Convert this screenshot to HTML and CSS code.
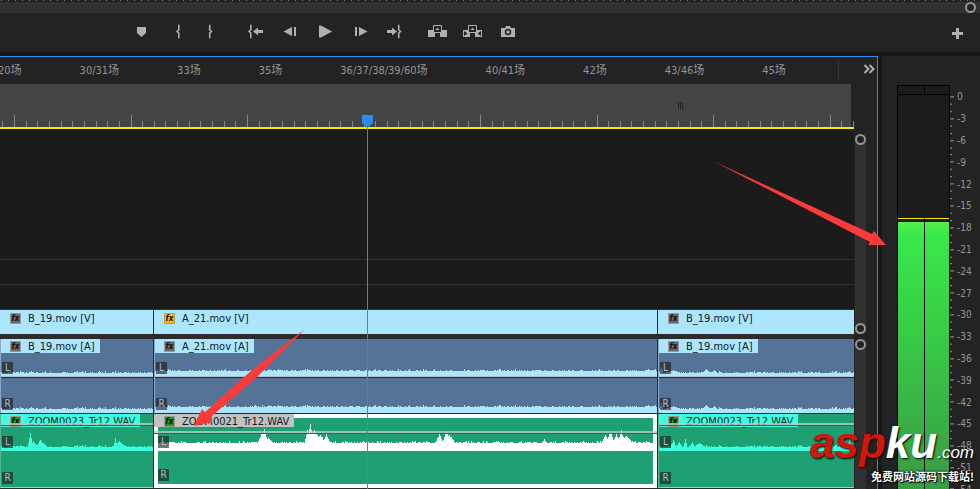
FILE: index.html
```html
<!DOCTYPE html>
<html lang="zh-CN">
<head>
    <meta charset="UTF-8">
    <meta name="viewport" content="width=device-width, initial-scale=1.0">
    <title>Timeline</title>
    <link rel="stylesheet" href="styles.css">
</head>
<body>
    <div class="monitor">
        <div class="mini-ruler"></div>
        <div class="zoom-bar"><span class="ring"></span></div>
        <div class="transport">
            <div class="group">
                <button aria-label="Add marker"><svg viewBox="0 0 21 19"><path d="M6 4h9v6l-4.500 4L6 10z"/></svg></button>
                <button aria-label="Mark in"><svg viewBox="0 0 21 19"><path class="line" d="M13.500 2.500h-.7V7L11 8.500l1.800 1.500v4.500h.7"/></svg></button>
                <button aria-label="Mark out"><svg viewBox="0 0 21 19"><path class="line" d="M8 2.500h.7V7l1.800 1.500L8.700 10v4.500H8"/></svg></button>
            </div>
            <div class="group">
                <button aria-label="Go to in"><svg viewBox="0 0 21 19"><path class="line" d="M7.500 2.500h-.7V7L5 8.500 6.800 10v4.500h.7"/><path d="M9 8.500l5-4V7h5v3h-5v2.500z"/></svg></button>
                <button aria-label="Step back"><svg viewBox="0 0 21 19"><path d="M4.500 8.500L13 4v9zM15 4h2v9h-2z"/></svg></button>
                <button aria-label="Play"><svg viewBox="0 0 21 19"><path d="M5 2.500h2l11 6-11 6H5z"/></svg></button>
                <button aria-label="Step forward"><svg viewBox="0 0 21 19"><path d="M6 4h2v9H6zM10 4l8.500 4.500L10 13z"/></svg></button>
                <button aria-label="Go to out"><svg viewBox="0 0 21 19"><path d="M3 7h5V4.500l5 4-5 4V10H3z"/><path class="line" d="M14 2.500h.7V7l1.800 1.500-1.800 1.500v4.500H14"/></svg></button>
            </div>
            <div class="group">
                <button aria-label="Lift"><svg viewBox="0 0 21 19"><path d="M1 7h7v7H1zM13 7h7v7h-7z"/><path class="box" d="M6.500 2.500h8v7h-8z"/><path d="M8.500 7h4l-2-2.500z"/></svg></button>
                <button aria-label="Extract"><svg viewBox="0 0 21 19"><path d="M1 7h7v7H1zM13 7h7v7h-7z"/><path class="box" d="M6.500 2.500h8v7h-8z"/><path d="M8.500 7h4l-2-2.500z"/><path class="hole" d="M2 8l3.500 2.500L2 13zM19 8l-3.500 2.500L19 13z"/></svg></button>
                <button aria-label="Export frame"><svg viewBox="0 0 21 19"><path d="M4 5h4l1-2h4l1 2h4v9H4z"/><circle class="lens" cx="11" cy="9" r="2.500"/></svg></button>
            </div>
            <button class="add" aria-label="Button editor"><svg viewBox="0 0 21 19"><path d="M9 5h3v4h4v3h-4v4H9v-4H5V9h4z"/></svg></button>
        </div>
    </div>

    <div class="workspace">
        <div class="timeline">
            <div class="tab-bar">
                <div class="tabs">
                    <button>20场</button>
                    <button>30/31场</button>
                    <button>33场</button>
                    <button>35场</button>
                    <button>36/37/38/39/60场</button>
                    <button>40/41场</button>
                    <button>42场</button>
                    <button>43/46场</button>
                    <button>45场</button>
                </div>
                <button class="more" aria-label="More sequences"><svg viewBox="0 0 12 10"><path d="M1.500 1l4 4-4 4M6.500 1l4 4-4 4"/></svg></button>
            </div>
            <div class="sequence">
                <div class="tracks">
                    <div class="ruler">
                        <span class="grip"></span>
                        <svg id="ticks" viewBox="0 0 854 12" preserveAspectRatio="none"></svg>
                    </div>
                    <div class="empty-area"></div>
                    <div class="empty-lane"></div>
                    <div class="empty-lane"></div>

                    <div class="track video">
                        <div class="clip"><div class="label"><i class="fx">fx</i>B_19.mov [V]</div></div>
                        <div class="clip"><div class="label"><i class="fx yellow">fx</i>A_21.mov [V]</div></div>
                        <div class="clip"><div class="label"><i class="fx">fx</i>B_19.mov [V]</div></div>
                    </div>

                    <div class="track audio">
                        <div class="clip">
                            <div class="label"><i class="fx">fx</i>B_19.mov [A]</div>
                            <div class="channel left"><b>L</b><svg class="wave" viewBox="0 0 153 37" data-base="3" data-peaks="30:2:2"></svg></div>
                            <div class="channel"><b>R</b><svg class="wave" viewBox="0 0 153 37" data-base="4" data-peaks="30:2:2"></svg></div>
                        </div>
                        <div class="clip">
                            <div class="label"><i class="fx">fx</i>A_21.mov [A]</div>
                            <div class="channel left"><b>L</b><svg class="wave" viewBox="0 0 503 37" data-base="5" data-peaks=""></svg></div>
                            <div class="channel"><b>R</b><svg class="wave" viewBox="0 0 503 37" data-base="6" data-peaks=""></svg></div>
                        </div>
                        <div class="clip">
                            <div class="label"><i class="fx">fx</i>B_19.mov [A]</div>
                            <div class="channel left"><b>L</b><svg class="wave" viewBox="0 0 196 37" data-base="3" data-peaks="2:7:2,14:3:8,47:4:5,55:3:3"></svg></div>
                            <div class="channel"><b>R</b><svg class="wave" viewBox="0 0 196 37" data-base="4" data-peaks="2:7:2,14:3:8,47:4:5,55:3:3"></svg></div>
                        </div>
                    </div>

                    <div class="track zoom">
                        <div class="clip">
                            <div class="label"><i class="fx green">fx</i>ZOOM0023_Tr12.WAV</div>
                            <div class="channel"><b>L</b><svg class="wave" viewBox="0 0 153 37" data-base="4" data-peaks="29:14:3,32:6:5,39:9:4,42:5:4,115:9:2,119:6:7"></svg></div>
                            <div class="channel"><b>R</b></div>
                            <span class="volume"></span>
                        </div>
                        <div class="clip selected">
                            <div class="label"><i class="fx green">fx</i>ZOOM0021_Tr12.WAV</div>
                            <div class="channel"><b>L</b><svg class="wave" viewBox="0 0 495 33" data-base="8" data-peaks="104:11:5,106:14:4,110:5:5,149:14:3,152:20:4,156:13:9,162:10:5,168:10:4,281:10:4,288:14:4,291:9:6,386:4:3,447:9:4,452:13:4,458:10:4,463:13:4,468:8:6"></svg></div>
                            <div class="channel"><b>R</b></div>
                            <span class="volume"></span>
                        </div>
                        <div class="clip">
                            <div class="label"><i class="fx green">fx</i>ZOOM0023_Tr12.WAV</div>
                            <div class="channel"><b>L</b><svg class="wave" viewBox="0 0 196 37" data-base="4" data-peaks="14:8:3,20:6:3,26:9:2,33:5:3,40:4:6,186:8:3,191:6:4"></svg></div>
                            <div class="channel"><b>R</b></div>
                            <span class="volume"></span>
                        </div>
                    </div>

                    <div class="playhead"><svg viewBox="0 0 11 14"><path d="M0 0h11v8l-5 4H5L0 8z"/></svg></div>
                </div>
                <div class="scrollbars">
                    <div class="scroll video-scroll"><span class="ring"></span><span class="ring"></span></div>
                    <div class="scroll audio-scroll"><span class="ring"></span></div>
                </div>
            </div>
        </div>

        <div class="meters">
            <div class="meter">
                <div class="clip-lights"><span></span><span></span></div>
                <div class="bars">
                    <span class="bar"></span>
                    <span class="bar"></span>
                </div>
            </div>
            <ol class="scale" id="scale"></ol>
        </div>
    </div>

    <svg class="arrows" viewBox="0 0 980 489">
        <path d="M713 161L872 234l2-3 12 14h-18l2-3z"/>
        <path d="M305 329L257 377 212 416v6l-18 4 8-17 3 3 47-42z"/>
    </svg>

    <div class="watermark">
        <div class="brand"><span class="red">asp</span><span>ku</span><span class="com">.com</span></div>
        <div class="slogan">免费网站源码下载站!</div>
    </div>

    <script src="script.js"></script>
</body>
</html>
```

FILE: styles.css
```css
* {
    box-sizing: border-box;
}
body {
    margin: 0;
    height: 100vh;
    display: flex;
    flex-direction: column;
    position: relative;
    overflow: hidden;
    background: #171717;
    color: #959595;
    font-family: 'DejaVu Sans Condensed', 'Noto Sans CJK SC', sans-serif;
    font-size: 11px;
}
button {
    background: none;
    border: 0;
    padding: 0;
    color: inherit;
    font: inherit;
}
svg {
    display: block;
}
.ring {
    display: block;
    width: 11px;
    height: 11px;
    border: 2px solid #959595;
    border-radius: 50%;
    background: #232323;
}

/* monitor strip */
.monitor {
    background: #232323;
}
.mini-ruler {
    height: 2px;
    background: repeating-linear-gradient(90deg, transparent 0 1px, #777 1px 2px, transparent 2px 7px) 0 0 / 100% 1px no-repeat;
}
.zoom-bar {
    height: 11px;
    background: #313131;
    display: flex;
    justify-content: flex-end;
    padding-right: 4px;
}
.transport {
    display: flex;
    align-items: center;
    gap: 8px;
    height: 39px;
    padding: 0 12px 0 124px;
}
.group {
    display: flex;
}
.transport button {
    width: 35px;
    display: flex;
    justify-content: center;
}
.transport svg {
    width: 21px;
    height: 19px;
    fill: #b0b0b0;
}
.transport .line {
    fill: none;
    stroke: #b0b0b0;
    stroke-width: 1.6;
}
.transport .box {
    fill: #232323;
    stroke: #b0b0b0;
}
.transport .hole {
    fill: #232323;
}
.transport .lens {
    fill: none;
    stroke: #232323;
    stroke-width: 1.5;
}
.transport .add {
    width: 21px;
    margin-left: auto;
}

.workspace {
    flex: 1;
    min-height: 0;
    display: flex;
    gap: 4px;
    margin-top: 4px;
}

/* timeline */
.timeline {
    flex: 1;
    min-width: 0;
    display: flex;
    flex-direction: column;
    background: #232323;
    border-top: 1px solid #2d8ceb;
    border-right: 1px solid #2d8ceb;
}
.tab-bar {
    display: flex;
    height: 27px;
    padding-bottom: 3px;
}
.tabs {
    flex: 1;
    min-width: 0;
    display: flex;
    align-items: center;
    gap: 58px;
    margin-left: -2px;
    white-space: nowrap;
}
.more {
    display: flex;
    align-items: center;
    margin: 3px 2px 0 0;
    padding: 0 0 3px 24px;
    border-left: 1px solid #333;
}
.more svg {
    width: 12px;
    height: 10px;
    fill: none;
    stroke: #b0b0b0;
    stroke-width: 2;
}
.sequence {
    flex: 1;
    min-height: 0;
    display: flex;
}
.tracks {
    flex: 1;
    position: relative;
    background: #2b2b2b;
}
.ruler {
    height: 45px;
    display: flex;
    flex-direction: column;
    justify-content: flex-end;
    position: relative;
    border-bottom: 2px solid #f4ee00;
    background: linear-gradient(90deg, #444 calc(100% - 3px), #232323 0);
}
.ruler svg {
    width: 100%;
    height: 12px;
    fill: #858585;
    shape-rendering: crispEdges;
}
.grip {
    position: absolute;
    left: 79.4%;
    top: 18px;
    width: 5px;
    height: 7px;
    background: repeating-linear-gradient(90deg, #222 0 1px, transparent 1px 2px);
}
.empty-area,
.empty-lane {
    background: #1b1b1b;
    border-bottom: 1px solid #333;
    height: 25px;
}
.empty-area {
    height: 131px;
}
.track {
    display: grid;
    grid-template-columns: 153fr 503fr 196fr;
    gap: 1px;
    background: #2b2b2b;
}
.clip {
    position: relative;
    min-width: 0;
}
.label {
    position: absolute;
    left: 0;
    top: 0;
    display: flex;
    align-items: center;
    height: 13px;
    padding: 1px 5px 0 10px;
    color: #101820;
    white-space: nowrap;
}
.fx {
    width: 11px;
    height: 11px;
    margin-right: 7px;
    border: 1px solid #999;
    background: #666;
    color: #111;
    font: italic bold 8px/9px 'DejaVu Sans Condensed', sans-serif;
    text-align: center;
}
.fx.yellow {
    background: #f5bd00;
    border-color: #c0a050;
}
.fx.green {
    background: #189a18;
}
.video {
    margin-bottom: 5px;
}
.video .clip {
    height: 24px;
    background: #ace5ff;
}
.video .label {
    height: 15px;
}
.audio {
    margin-bottom: 1px;
}
.audio .clip {
    background: #557297;
    border-left: 1px solid #8aa8c4;
}
.audio .label {
    height: 14px;
    background: #ace5ff;
    padding-left: 9px;
}
.channel {
    position: relative;
    display: flex;
    flex-direction: column;
    justify-content: flex-end;
    height: 35px;
}
.channel.left {
    height: 39px;
    border-bottom: 1px solid #2b2b2b;
    box-shadow: inset 0 -1px #b9c2c8;
    padding-bottom: 1px;
}
.channel b {
    position: absolute;
    left: 1px;
    bottom: 3px;
    width: 11px;
    height: 12px;
    background: rgba(20, 25, 30, 0.6);
    color: #b5bcc0;
    font-size: 10px;
    font-weight: normal;
    line-height: 12px;
    text-align: center;
}
.wave {
    width: 100%;
    height: 37px;
    flex-shrink: 0;
    fill: #ace5ff;
    shape-rendering: crispEdges;
}
.zoom .clip {
    height: 74px;
    background: #1ea073;
    border-left: 1px solid #55b891;
    border-bottom: 1px solid #3dffe0;
}
.zoom .channel {
    height: 37px;
}
.zoom .channel + .channel {
    height: 36px;
}
.zoom .label {
    background: #3dffe0;
    padding-left: 9px;
}
.zoom .wave {
    fill: #3dffe0;
}
.zoom .selected {
    border: 4px solid #fff;
}
.zoom .selected .label {
    left: -4px;
    top: -4px;
    padding-left: 10px;
    background: #c2c2c2;
    z-index: 1;
}
.zoom .selected .channel {
    height: 33px;
}
.zoom .selected .channel b {
    left: 0;
}
.zoom .selected .wave {
    height: 33px;
    fill: #fff;
}
.volume {
    position: absolute;
    left: 0;
    right: 0;
    top: 9px;
    height: 3px;
    background: rgba(190, 200, 195, 0.8);
    border-bottom: 1px solid #3f5f53;
}
.selected .volume {
    left: -4px;
    right: -4px;
    top: 13px;
}
.playhead {
    position: absolute;
    left: 43%;
    top: 31px;
    bottom: 0;
    width: 1px;
    background: #2d8ceb;
}
.playhead svg {
    width: 11px;
    height: 14px;
    margin-left: -5px;
    fill: #2d8ceb;
}
.scrollbars {
    width: 23px;
    padding: 50px 11px 0 1px;
    display: flex;
    flex-direction: column;
    gap: 5px;
}
.scroll {
    display: flex;
    flex-direction: column;
    justify-content: space-between;
    background: #313131;
    border-radius: 5px 5px 0 0;
}
.video-scroll {
    height: 200px;
}
.audio-scroll {
    flex: 1;
}

/* audio meters */
.meters {
    width: 98px;
    display: flex;
    padding: 29px 0 0 15px;
    overflow: hidden;
    background: #232323;
}
.meter {
    width: 53px;
    display: flex;
    flex-direction: column;
    border: 1px solid #000;
    border-bottom: 0;
    background: #1c1c1c;
}
.clip-lights,
.bars {
    display: grid;
    grid-template-columns: 1fr 1fr;
}
.clip-lights {
    height: 9px;
    border-bottom: 1px solid #000;
}
.clip-lights span + span,
.bar + .bar {
    border-left: 1px solid #000;
}
.bars {
    flex: 1;
    padding-top: 123px;
}
.bar {
    border-top: 1px solid #f5e800;
    background: linear-gradient(#55ef4b, #37e94a 14px, #37cf45 100px, #3a9a45 270px) 0 3px no-repeat;
}
.scale {
    flex: 1;
    display: flex;
    flex-direction: column;
    margin: 1px 0 -11px;
    padding: 0;
    list-style: none;
    font-size: 10px;
}
.scale li {
    flex: 1;
    display: flex;
    align-items: center;
    gap: 3px;
    min-height: 0;
}
.scale svg {
    width: 4px;
    height: 100%;
    fill: #959595;
}

/* overlays */
.arrows {
    position: absolute;
    inset: 0;
    z-index: 2;
    width: 100%;
    height: 100%;
    fill: #fb3b3a;
    pointer-events: none;
}
.watermark {
    position: absolute;
    right: 6px;
    bottom: 6px;
    z-index: 2;
    text-align: right;
    color: #fff;
    white-space: nowrap;
    text-shadow: 1px 1px 2px #000;
}
.brand {
    font: italic bold 44px/32px 'Liberation Sans', sans-serif;
}
.brand .red {
    color: #d3160c;
}
.brand .com {
    font-size: 17px;
    font-weight: normal;
}
.slogan {
    font: bold 11px/14px 'Noto Sans CJK SC', sans-serif;
    text-shadow: 0 0 2px #000, 0 0 2px #000, 1px 1px 1px #000;
}
```

FILE: script.js
```js
const SVG_NS = 'http://www.w3.org/2000/svg';

function addRect(svg, x, y, width, height) {
    const rect = document.createElementNS(SVG_NS, 'rect');
    rect.setAttribute('x', x);
    rect.setAttribute('y', y);
    rect.setAttribute('width', width);
    rect.setAttribute('height', height);
    svg.appendChild(rect);
}

// time ruler, every tenth tick is long
const ticks = document.getElementById('ticks');
for (let i = -1; i < 73; i++) {
    const x = Math.round(14 + i * 11.65);
    const height = i % 10 === 0 ? 12 : 6;
    addRect(ticks, x, 12 - height, 1, height);
}

// meter scale
const scale = document.getElementById('scale');
for (let db = 0; db >= -54; db -= 3) {
    const item = document.createElement('li');
    const marks = document.createElementNS(SVG_NS, 'svg');
    marks.setAttribute('viewBox', '0 0 4 21');
    marks.setAttribute('preserveAspectRatio', 'none');
    addRect(marks, 0, 10, 4, 1);
    if (db < 0) addRect(marks, 0, 3, 2, 1);
    addRect(marks, 0, 17, 2, 1);
    item.append(marks, String(db));
    scale.appendChild(item);
}

// waveforms: low noise floor with peaks given as x:height:spread
document.querySelectorAll('.wave').forEach((svg) => {
    const [, , width, height] = svg.getAttribute('viewBox').split(' ').map(Number);
    const base = Number(svg.dataset.base);
    const peaks = svg.dataset.peaks.split(',').filter(Boolean).map(p => p.split(':').map(Number));
    let seed = width;
    let d = `M0 ${height}`;
    svg.setAttribute('preserveAspectRatio', 'none');

    for (let x = 0; x < width; x++) {
        seed = (seed * 1103515245 + 12345) % 2147483648;
        const noise = seed / 2147483648;
        let level = base + (noise > 0.95 ? 2 : noise > 0.6 ? 1 : 0);
        peaks.forEach(([px, ph, spread]) => {
            const fall = 1 - Math.abs(x - px) / spread;
            if (fall > 0) level = Math.max(level, base + ph * fall * (0.8 + noise * 0.2));
        });
        d += `V${height - Math.round(level)}h1`;
    }

    const path = document.createElementNS(SVG_NS, 'path');
    path.setAttribute('d', d + `V${height}z`);
    svg.appendChild(path);
});
```
